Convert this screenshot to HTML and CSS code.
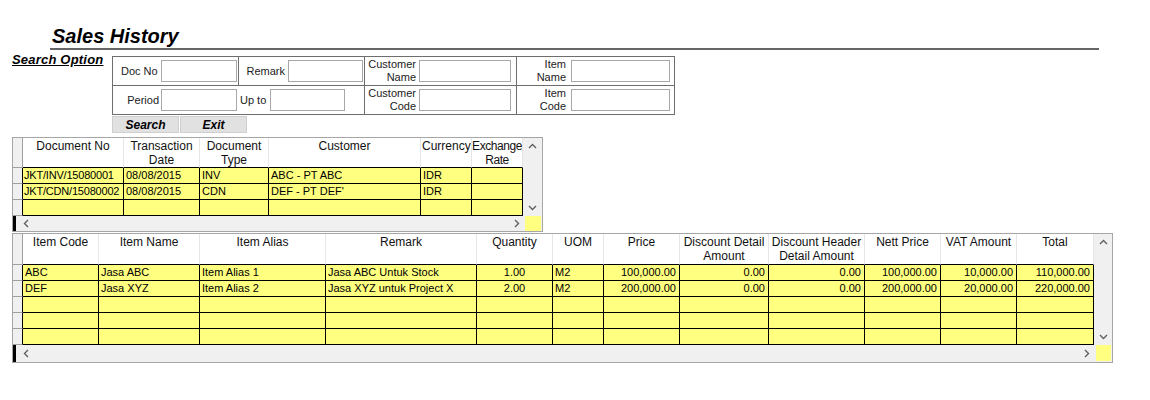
FILE: index.html
```html
<!DOCTYPE html>
<html>
<head>
<meta charset="utf-8">
<link rel="stylesheet" href="styles.css">
</head>
<body>
<div class="header"><h1 class="title">Sales History</h1></div>

<div class="search-row">
  <div class="search-label">Search Option</div>
  <div class="search-col">
    <div class="search-form">
      <div class="cell c1 r1"><span class="lbl l1 left">Doc No</span><input class="inp i76" type="text"></div>
      <div class="cell c2 r1"><span class="lbl l2">Remark</span><input class="inp i75" type="text"></div>
      <div class="cell c3 r1"><span class="lbl l3">Customer<br>Name</span><input class="inp i92" type="text"></div>
      <div class="cell c4 r1"><span class="lbl l4">Item<br>Name</span><input class="inp i99" type="text"></div>
      <div class="cell c1 r2 nob"><span class="lbl l1">Period</span><input class="inp i76" type="text"></div>
      <div class="cell c2 r2"><span class="lbl l2b">Up to</span><input class="inp i75" type="text"></div>
      <div class="cell c3 r2"><span class="lbl l3">Customer<br>Code</span><input class="inp i92" type="text"></div>
      <div class="cell c4 r2"><span class="lbl l4">Item<br>Code</span><input class="inp i99" type="text"></div>
    </div>
    <div class="buttons">
      <button class="btn" type="button">Search</button>
      <button class="btn" type="button">Exit</button>
    </div>
  </div>
</div>

<div class="grid grid-top">
  <div class="g-main">
    <div class="g-head">
      <div class="rh rh-head"></div>
      <div class="hc t1">Document No</div>
      <div class="hc t2">Transaction Date</div>
      <div class="hc t3">Document Type</div>
      <div class="hc t4">Customer</div>
      <div class="hc t5">Currency</div>
      <div class="hc t6 tight">Exchange Rate</div>
    </div>
    <div class="g-row">
      <div class="rh"></div>
      <div class="dc t1">JKT/INV/15080001</div>
      <div class="dc t2">08/08/2015</div>
      <div class="dc t3">INV</div>
      <div class="dc t4">ABC - PT ABC</div>
      <div class="dc t5">IDR</div>
      <div class="dc t6"></div>
    </div>
    <div class="g-row">
      <div class="rh"></div>
      <div class="dc t1">JKT/CDN/15080002</div>
      <div class="dc t2">08/08/2015</div>
      <div class="dc t3">CDN</div>
      <div class="dc t4">DEF - PT DEF'</div>
      <div class="dc t5">IDR</div>
      <div class="dc t6"></div>
    </div>
    <div class="g-row">
      <div class="rh"></div>
      <div class="dc t1"></div>
      <div class="dc t2"></div>
      <div class="dc t3"></div>
      <div class="dc t4"></div>
      <div class="dc t5"></div>
      <div class="dc t6"></div>
    </div>
    <div class="hs">
      <span class="hs-mark"></span>
      <svg class="arr-l" width="6" height="9" viewBox="0 0 6 9"><polyline points="5,1 1.5,4.5 5,8" fill="none" stroke="#606060" stroke-width="1.4"/></svg>
      <span class="hs-fill"></span>
      <svg class="arr-r" width="6" height="9" viewBox="0 0 6 9"><polyline points="1,1 4.5,4.5 1,8" fill="none" stroke="#606060" stroke-width="1.4"/></svg>
    </div>
  </div>
  <div class="vs">
    <div class="vs-btn"><svg width="9" height="6" viewBox="0 0 9 6"><polyline points="1,5 4.5,1.5 8,5" fill="none" stroke="#606060" stroke-width="1.4"/></svg></div>
    <div class="vs-fill"></div>
    <div class="vs-btn"><svg width="9" height="6" viewBox="0 0 9 6"><polyline points="1,1 4.5,4.5 8,1" fill="none" stroke="#606060" stroke-width="1.4"/></svg></div>
    <div class="corner"></div>
  </div>
</div>

<div class="grid grid-bottom">
  <div class="g-main">
    <div class="g-head">
      <div class="rh rh-head"></div>
      <div class="hc b1">Item Code</div>
      <div class="hc b2">Item Name</div>
      <div class="hc b3">Item Alias</div>
      <div class="hc b4">Remark</div>
      <div class="hc b5">Quantity</div>
      <div class="hc b6">UOM</div>
      <div class="hc b7">Price</div>
      <div class="hc b8">Discount Detail Amount</div>
      <div class="hc b9">Discount Header Detail Amount</div>
      <div class="hc b10">Nett Price</div>
      <div class="hc b11">VAT Amount</div>
      <div class="hc b12">Total</div>
    </div>
    <div class="g-row">
      <div class="rh"></div>
      <div class="dc b1">ABC</div>
      <div class="dc b2">Jasa ABC</div>
      <div class="dc b3">Item Alias 1</div>
      <div class="dc b4">Jasa ABC Untuk Stock</div>
      <div class="dc b5 mid">1.00</div>
      <div class="dc b6">M2</div>
      <div class="dc b7 num">100,000.00</div>
      <div class="dc b8 num">0.00</div>
      <div class="dc b9 num">0.00</div>
      <div class="dc b10 num">100,000.00</div>
      <div class="dc b11 num">10,000.00</div>
      <div class="dc b12 num">110,000.00</div>
    </div>
    <div class="g-row">
      <div class="rh"></div>
      <div class="dc b1">DEF</div>
      <div class="dc b2">Jasa XYZ</div>
      <div class="dc b3">Item Alias 2</div>
      <div class="dc b4">Jasa XYZ untuk Project X</div>
      <div class="dc b5 mid">2.00</div>
      <div class="dc b6">M2</div>
      <div class="dc b7 num">200,000.00</div>
      <div class="dc b8 num">0.00</div>
      <div class="dc b9 num">0.00</div>
      <div class="dc b10 num">200,000.00</div>
      <div class="dc b11 num">20,000.00</div>
      <div class="dc b12 num">220,000.00</div>
    </div>
    <div class="g-row">
      <div class="rh"></div>
      <div class="dc b1"></div><div class="dc b2"></div><div class="dc b3"></div><div class="dc b4"></div>
      <div class="dc b5"></div><div class="dc b6"></div><div class="dc b7"></div><div class="dc b8"></div>
      <div class="dc b9"></div><div class="dc b10"></div><div class="dc b11"></div><div class="dc b12"></div>
    </div>
    <div class="g-row">
      <div class="rh"></div>
      <div class="dc b1"></div><div class="dc b2"></div><div class="dc b3"></div><div class="dc b4"></div>
      <div class="dc b5"></div><div class="dc b6"></div><div class="dc b7"></div><div class="dc b8"></div>
      <div class="dc b9"></div><div class="dc b10"></div><div class="dc b11"></div><div class="dc b12"></div>
    </div>
    <div class="g-row">
      <div class="rh"></div>
      <div class="dc b1"></div><div class="dc b2"></div><div class="dc b3"></div><div class="dc b4"></div>
      <div class="dc b5"></div><div class="dc b6"></div><div class="dc b7"></div><div class="dc b8"></div>
      <div class="dc b9"></div><div class="dc b10"></div><div class="dc b11"></div><div class="dc b12"></div>
    </div>
    <div class="hs">
      <span class="hs-mark"></span>
      <svg class="arr-l" width="6" height="9" viewBox="0 0 6 9"><polyline points="5,1 1.5,4.5 5,8" fill="none" stroke="#606060" stroke-width="1.4"/></svg>
      <span class="hs-fill"></span>
      <svg class="arr-r" width="6" height="9" viewBox="0 0 6 9"><polyline points="1,1 4.5,4.5 1,8" fill="none" stroke="#606060" stroke-width="1.4"/></svg>
    </div>
  </div>
  <div class="vs">
    <div class="vs-btn"><svg width="9" height="6" viewBox="0 0 9 6"><polyline points="1,5 4.5,1.5 8,5" fill="none" stroke="#606060" stroke-width="1.4"/></svg></div>
    <div class="vs-fill"></div>
    <div class="vs-btn"><svg width="9" height="6" viewBox="0 0 9 6"><polyline points="1,1 4.5,4.5 8,1" fill="none" stroke="#606060" stroke-width="1.4"/></svg></div>
    <div class="corner"></div>
  </div>
</div>
</body>
</html>
```
FILE: styles.css
```css
html, body {
  margin: 0;
  padding: 0;
  background: #ffffff;
  font-family: "Liberation Sans", Arial, sans-serif;
  color: #000;
}

/* ---------- header ---------- */
.header {
  margin-left: 50px;
  width: 1049px;
  border-bottom: 2px solid #666666;
}
.title {
  margin: 0;
  padding: 25px 0 0 2px;
  font-size: 20px;
  line-height: 23px;
  font-weight: bold;
  font-style: italic;
}

/* ---------- search ---------- */
.search-row {
  display: flex;
  margin-top: 2px;
  padding-left: 12px;
}
.search-label {
  width: 100px;
  font-size: 13px;
  line-height: 15px;
  font-weight: bold;
  font-style: italic;
  text-decoration: underline;
  letter-spacing: 0.2px;
  white-space: nowrap;
}
.search-col {
  display: flex;
  flex-direction: column;
  margin-top: 4px;
}
.search-form {
  display: grid;
  grid-template-columns: 126px 126px 152px 157px;
  grid-template-rows: 29px 28px;
  border: 1px solid #6e6e6e;
}
.cell {
  display: flex;
  align-items: center;
  box-sizing: border-box;
  border-right: 1px solid #6e6e6e;
  font-size: 11px;
  color: #222;
}
.cell.r1 { border-bottom: 1px solid #6e6e6e; }
.cell.c4 { border-right: none; }
.cell.nob { border-right: none; }
.cell.c2.r2 { padding-left: 1px; }
.lbl {
  box-sizing: border-box;
  text-align: right;
  line-height: 13px;
  white-space: nowrap;
}
.l1 { width: 48px; padding-right: 2px; }
.l1.left { text-align: left; padding-left: 8px; padding-right: 0; }
.l2 { width: 49px; padding-right: 3px; }
.l2b { width: 30px; text-align: left; }
.l3 { width: 54px; padding-right: 3px; }
.l4 { width: 54px; padding-right: 5px; }
.inp {
  box-sizing: border-box;
  height: 22px;
  margin: 0;
  padding: 0;
  border: 1px solid #a8a8a8;
  background: #fff;
}
.i76 { width: 76px; }
.i75 { width: 75px; }
.i92 { width: 92px; }
.i99 { width: 99px; }

.buttons {
  display: flex;
  gap: 1px;
  margin-top: 1px;
}
.btn {
  box-sizing: border-box;
  width: 67px;
  height: 17px;
  margin: 0;
  padding: 0;
  border: 1px solid #cfcfcf;
  background: #e1e1e1;
  font-family: "Liberation Sans", Arial, sans-serif;
  font-size: 12px;
  line-height: 14px;
  font-weight: bold;
  font-style: italic;
  color: #000;
}

/* ---------- grids ---------- */
.grid {
  display: flex;
  width: max-content;
  margin-left: 12px;
  border: 1px solid #a6a6a6;
}
.grid-top { margin-top: 4px; }
.grid-bottom { margin-top: 1px; }

.g-main {
  display: flex;
  flex-direction: column;
}
.g-head, .g-row {
  display: flex;
}
.rh {
  box-sizing: border-box;
  width: 10px;
  height: 16px;
  background: #f0f0f0;
  border-right: 1px solid #000;
  border-bottom: 1px solid #a0a0a0;
}
.rh-head {
  height: 30px;
  border-right: 1px solid #a0a0a0;
}
.grid-bottom .rh-head { height: 31px; }

.hc {
  box-sizing: border-box;
  height: 30px;
  padding: 1px 1px 0;
  background: #fff;
  border-right: 1px solid #e6e6e6;
  border-bottom: 1px solid #000;
  text-align: center;
  font-size: 12px;
  line-height: 14px;
  color: #111;
  overflow: hidden;
}
.hc.tight {
  padding: 1px 0 0;
  letter-spacing: -0.45px;
}
.grid-bottom .hc { height: 31px; }

.dc {
  box-sizing: border-box;
  height: 16px;
  padding: 0 2px;
  background: #ffff80;
  border-right: 1px solid #000;
  border-bottom: 1px solid #000;
  font-size: 11px;
  line-height: 15px;
  white-space: nowrap;
  overflow: hidden;
  color: #000;
}
.dc.t1 {
  padding-left: 1px;
  letter-spacing: -0.2px;
}
.dc.num {
  text-align: right;
  padding-right: 3px;
}
.dc.mid {
  text-align: center;
}

/* column widths: top grid */
.t1 { width: 101px; }
.t2 { width: 76px; }
.t3 { width: 69px; }
.t4 { width: 152px; }
.t5 { width: 51px; }
.t6 { width: 51px; }

/* column widths: bottom grid */
.b1 { width: 76px; }
.b2 { width: 101px; }
.b3 { width: 126px; }
.b4 { width: 151px; }
.b5 { width: 76px; }
.b6 { width: 51px; }
.b7 { width: 76px; }
.b8 { width: 89px; }
.b9 { width: 96px; }
.b10 { width: 76px; }
.b11 { width: 76px; }
.b12 { width: 77px; }

/* horizontal scrollbar */
.hs {
  display: flex;
  align-items: center;
  height: 15px;
  background: #f0f0f0;
}
.grid-bottom .hs { height: 17px; }
.hs-mark {
  align-self: stretch;
  width: 3px;
  background: #000;
}
.arr-l { margin-left: 7px; }
.hs-fill { flex: 1; }
.grid-top .arr-r { margin-right: 3px; }
.grid-bottom .arr-r { margin-right: 4px; }

/* vertical scrollbar */
.vs {
  display: flex;
  flex-direction: column;
  width: 19px;
  background: #f0f0f0;
}
.grid-bottom .vs { width: 18px; }
.vs-btn {
  display: flex;
  align-items: center;
  justify-content: center;
  height: 16px;
}
.vs-fill { flex: 1; }
.corner {
  height: 15px;
  margin-left: 2px;
  margin-right: 1px;
  background: #ffff80;
}
.grid-bottom .corner {
  height: 16px;
  margin-bottom: 1px;
}
```
